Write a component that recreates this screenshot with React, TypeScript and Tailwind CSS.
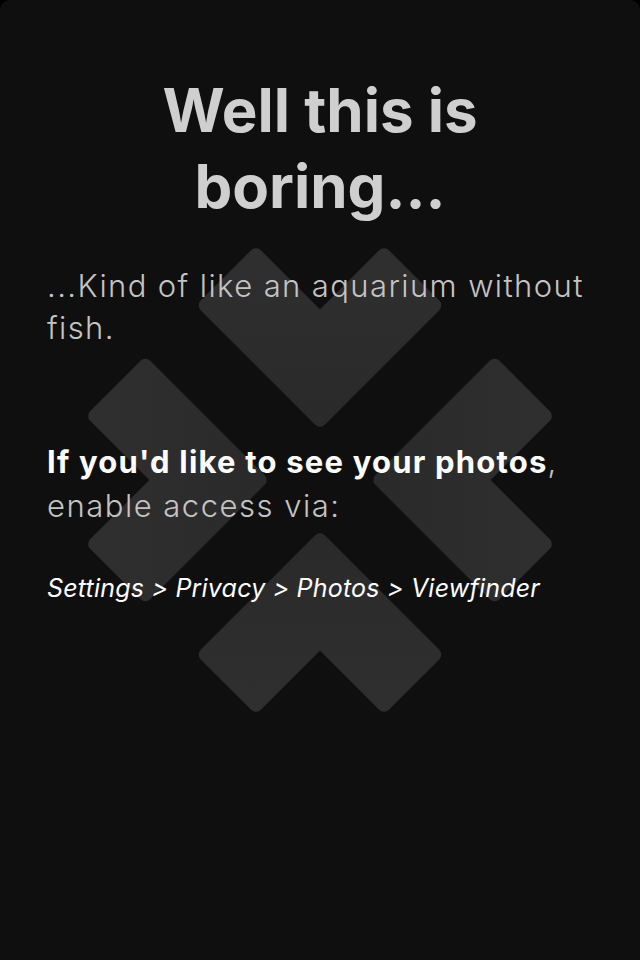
import React from 'react'

function Chevron() {
  // one inward-pointing chevron, drawn pointing down, centred on the logo origin
  return (
    <path
      d="M-118 -180 L-66 -232 L0 -166 L66 -232 L118 -180 L0 -62 Z"
      strokeLinejoin="round"
      strokeWidth={14}
    />
  )
}

function Logo() {
  return (
    <svg
      className="pointer-events-none absolute left-[80px] top-[240px]"
      width={480}
      height={480}
      viewBox="-240 -240 480 480"
    >
      <defs>
        <linearGradient id="logoFill" x1="0" y1="-240" x2="0" y2="240" gradientUnits="userSpaceOnUse">
          <stop offset="0" stopColor="#2f2f2f" />
          <stop offset="1" stopColor="#222222" />
        </linearGradient>
      </defs>
      <g fill="url(#logoFill)" stroke="url(#logoFill)">
        <g transform="scale(0.97)">
          <Chevron />
        </g>
        <g transform="rotate(90) scale(0.97)">
          <Chevron />
        </g>
        <g transform="rotate(180) scale(0.97)">
          <Chevron />
        </g>
        <g transform="rotate(270) scale(0.97)">
          <Chevron />
        </g>
      </g>
    </svg>
  )
}

export default function App() {
  return (
    <div className="h-[960px] w-[640px] bg-black">
      <div
        className="relative h-full w-full overflow-hidden rounded-t-[10px] bg-[#0f0f0f]"
        style={{ fontFamily: 'Inter, "Open Sans", sans-serif' }}
      >
        <Logo />
        <div className="relative px-[47px] pt-[72px]">
          <h1 className="text-center text-[60px] font-bold leading-[76px] text-[#cfcfcf]">
            Well this is
            <br />
            boring...
          </h1>
          <p className="mt-[41px] text-[31px] font-light leading-[42px] tracking-[1.4px] text-[#c4c4c4]">
            ...Kind of like an aquarium without fish.
          </p>
          <p className="mt-[91px] text-[31px] font-light leading-[44px] tracking-[1.5px] text-[#c4c4c4]">
            <span className="font-bold tracking-[1.2px] text-white">If you'd like to see your photos</span>, enable access via:
          </p>
          <p className="mt-[42px] text-[25px] italic leading-[36px] tracking-[0.2px] text-white">
            Settings &gt; Privacy &gt; Photos &gt; Viewfinder
          </p>
        </div>
      </div>
    </div>
  )
}
